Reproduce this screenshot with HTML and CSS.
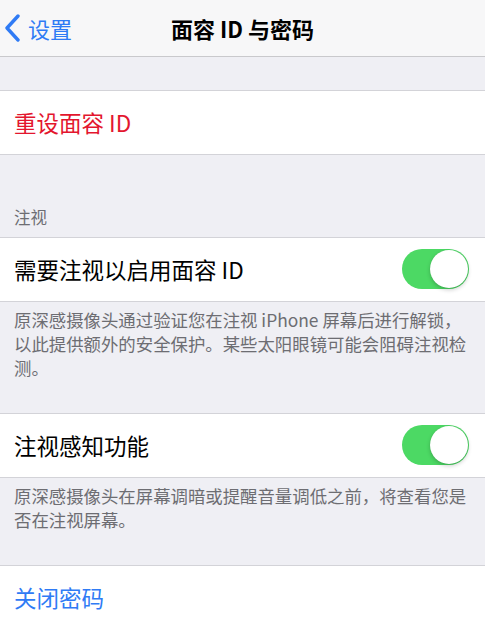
FILE: index.html
```html
<!DOCTYPE html>
<html>
  <head>
    <meta charset="utf-8">
    <title>面容 ID 与密码</title>
    <link rel="stylesheet" href="styles.css">
  </head>
  <body>
    <header class="nav">
      <a class="nav-back">
        <svg class="chevron" width="18" height="28" viewBox="0 0 18 28">
          <polyline points="14,2 3,14 14,26" />
        </svg>
        <span>设置</span>
      </a>
      <h1 class="nav-title">面容 ID 与密码</h1>
      <span></span>
    </header>

    <div class="spacer"></div>

    <section class="group">
      <div class="cell cell-red">重设面容 ID</div>
    </section>

    <div class="section-header">注视</div>

    <section class="group">
      <div class="cell">
        <span>需要注视以启用面容 ID</span>
        <span class="toggle on"><span class="knob"></span></span>
      </div>
    </section>
    <p class="footer">原深感摄像头通过验证您在注视 iPhone 屏幕后进行解锁，以此提供额外的安全保护。某些太阳眼镜可能会阻碍注视检测。</p>

    <section class="group">
      <div class="cell">
        <span>注视感知功能</span>
        <span class="toggle on"><span class="knob"></span></span>
      </div>
    </section>
    <p class="footer">原深感摄像头在屏幕调暗或提醒音量调低之前，将查看您是否在注视屏幕。</p>

    <section class="group">
      <div class="cell cell-blue">关闭密码</div>
    </section>
  </body>
</html>
```

FILE: styles.css
```css
:root {
  --ios-bg: #efeff4;
  --ios-line: #d3d3d8;
  --ios-blue: #2f7bf5;
  --ios-red: #e3162e;
  --ios-green: #4cd964;
  --ios-gray: #6d6d72;
}

body {
  margin: 0;
  background: var(--ios-bg);
  font-family: "Noto Sans CJK SC", "Noto Sans", sans-serif;
  overflow: hidden;
}

/* Navigation bar */
.nav {
  display: grid;
  grid-template-columns: 1fr auto 1fr;
  align-items: center;
  height: 56px;
  background: #f7f7f8;
  border-bottom: 1px solid #c9c9cc;
}

.nav-back {
  display: flex;
  align-items: center;
  gap: 6px;
  padding-left: 4px;
  color: var(--ios-blue);
  font-size: 22px;
}

.chevron polyline {
  fill: none;
  stroke: var(--ios-blue);
  stroke-width: 3.4;
  stroke-linecap: round;
  stroke-linejoin: round;
}

.nav-title {
  margin: 0;
  font-size: 22px;
  font-weight: 700;
  color: #000;
}

.spacer {
  height: 33px;
}

/* Table groups */
.group {
  background: #fff;
  border-top: 1px solid var(--ios-line);
  border-bottom: 1px solid var(--ios-line);
}

.cell {
  display: flex;
  align-items: center;
  justify-content: space-between;
  height: 61px;
  padding: 0 16px 2px 14px;
  font-size: 22.5px;
  color: #000;
}

.cell-red {
  color: var(--ios-red);
}

.cell-blue {
  color: var(--ios-blue);
}

.section-header {
  display: flex;
  align-items: flex-end;
  height: 74px;
  padding: 0 14px 8px;
  font-size: 16.5px;
  color: var(--ios-gray);
}

.footer {
  margin: 0;
  padding: 6px 14px 33px;
  font-size: 17.4px;
  line-height: 24px;
  color: var(--ios-gray);
}

/* Switch */
.toggle {
  position: relative;
  width: 67px;
  height: 40px;
  border-radius: 20px;
  background: #e5e5ea;
  flex-shrink: 0;
}

.toggle.on {
  background: var(--ios-green);
}

.knob {
  position: absolute;
  top: 1px;
  right: 1px;
  width: 38px;
  height: 38px;
  border-radius: 50%;
  background: #fff;
  box-shadow: 0 2px 4px rgba(0, 0, 0, 0.2), 0 0 1px rgba(0, 0, 0, 0.15);
}
```
